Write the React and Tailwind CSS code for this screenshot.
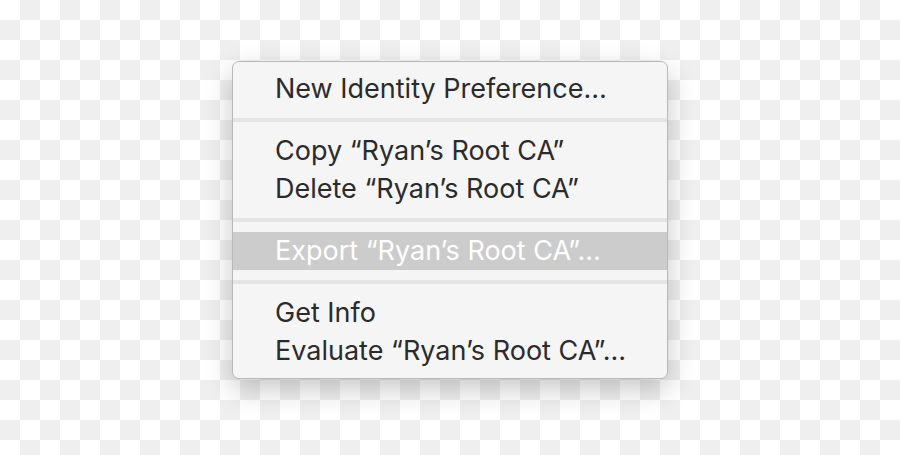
import React from "react";

function Item({ children, active }) {
  return (
    <div
      className={
        "h-[38px] flex items-center pl-[42px] pb-[2px] text-[27px] leading-none tracking-[0px] " +
        (active ? "bg-[#cccccc] text-white" : "text-[#2b2b2b]")
      }
    >
      {children}
    </div>
  );
}

function Sep() {
  return (
    <div className="py-[10px]">
      <div className="h-[4px] bg-[#e4e4e4]" />
    </div>
  );
}

export default function App() {
  return (
    <div
      className="w-[900px] h-[455px] overflow-hidden bg-[repeating-conic-gradient(#efefef_0_25%,#ffffff_0_50%)] bg-[length:40px_40px] pl-[232px] pt-[61px]"
      style={{ fontFamily: "Inter, 'Liberation Sans', sans-serif" }}
    >
      <div className="w-[436px] rounded-[7px] border border-[#b8b8b8] bg-[#f5f5f5] py-[8px] shadow-[0_10px_28px_rgba(0,0,0,0.22)]">
        <Item>New Identity Preference…</Item>
        <Sep />
        <Item>Copy “Ryan’s Root CA”</Item>
        <Item>Delete “Ryan’s Root CA”</Item>
        <Sep />
        <Item active>Export “Ryan’s Root CA”…</Item>
        <Sep />
        <Item>Get Info</Item>
        <Item>Evaluate “Ryan’s Root CA”…</Item>
      </div>
    </div>
  );
}
